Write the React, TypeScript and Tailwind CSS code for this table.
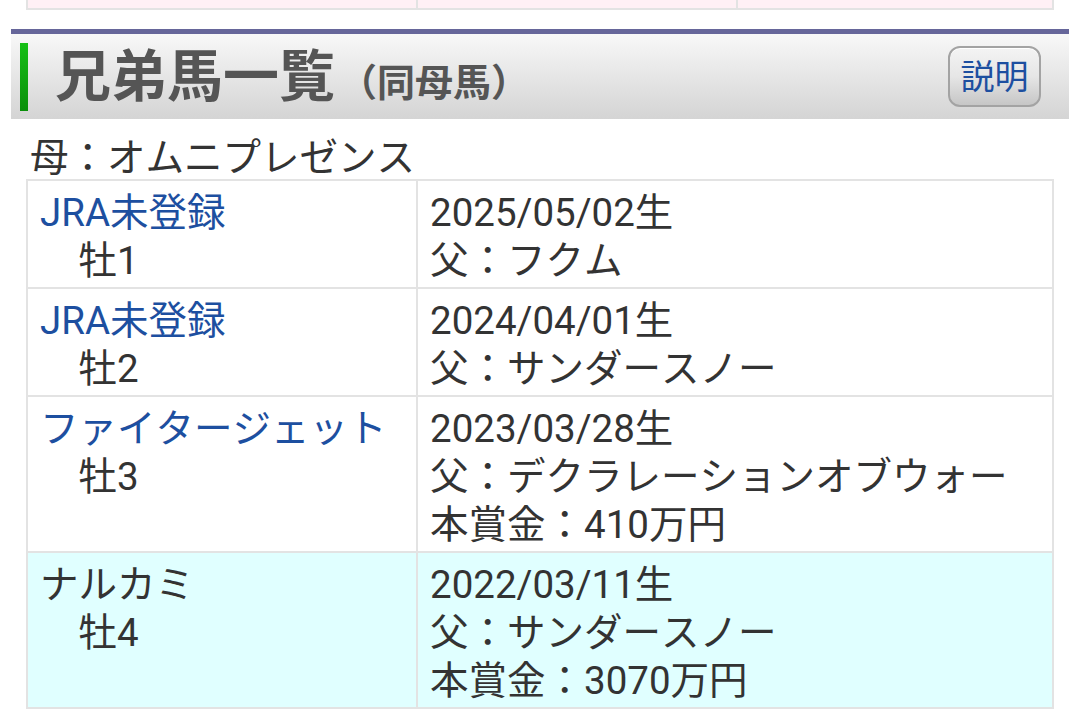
import React from 'react';

interface Sibling {
  name: string;
  link: boolean;
  sex: string;
  birth: string;
  sire: string;
  prize?: string;
  highlight?: boolean;
}

const siblings: Sibling[] = [
  { name: 'JRA未登録', link: true, sex: '牡1', birth: '2025/05/02生', sire: 'フクム' },
  { name: 'JRA未登録', link: true, sex: '牡2', birth: '2024/04/01生', sire: 'サンダースノー' },
  {
    name: 'ファイタージェット',
    link: true,
    sex: '牡3',
    birth: '2023/03/28生',
    sire: 'デクラレーションオブウォー',
    prize: '410万円',
  },
  {
    name: 'ナルカミ',
    link: false,
    sex: '牡4',
    birth: '2022/03/11生',
    sire: 'サンダースノー',
    prize: '3070万円',
    highlight: true,
  },
];

export default function App() {
  return (
    <div
      className="min-h-[712px] bg-white text-[#333] [font-kerning:none]"
      style={{ fontFamily: 'Roboto, "Noto Sans CJK JP", sans-serif' }}
    >
      {/* 前のテーブルの下端 */}
      <div className="mx-[26px] grid h-[10px] grid-cols-[390px_320px_1fr] border-x-2 border-b-2 border-[#e3e3e3] bg-[#fff0f5]">
        <div className="border-r-2 border-[#e3e3e3]" />
        <div className="border-r-2 border-[#e3e3e3]" />
        <div />
      </div>

      {/* 見出し */}
      <div className="mx-[11px] mt-[19px] flex h-[90px] items-center border-t-[5px] border-[#66669a] bg-gradient-to-b from-[#f8f8f8] to-[#d4d4d4] pl-[9px] pr-[28px]">
        <div className="h-[68px] w-2 bg-gradient-to-b from-[#16c016] to-[#0a8f0a]" />
        <h2 className="ml-[27px] text-[56px] font-bold leading-none text-[#555]">
          兄弟馬一覧<span className="ml-1 text-[38px]">（同母馬）</span>
        </h2>
        <button className="ml-auto flex h-[61px] w-[93px] items-center justify-center rounded-[12px] border-2 border-[#a3a3a3] bg-gradient-to-b from-[#f4f4f4] via-[#e6e6e6] to-[#c6c6c6] text-[34px] leading-none text-[#1d4fa0] shadow-[inset_0_1px_0_#fff]">
          説明
        </button>
      </div>

      <div className="mt-[12px] pl-[30px] pt-[6px] text-[38.5px] leading-[42px]">母：オムニプレゼンス</div>

      <div className="mx-[26px]">
        <table className="w-full border-collapse text-[38.5px] leading-[48px]">
          <tbody>
            {siblings.map((s, i) => (
              <tr key={i} className={s.highlight ? 'bg-[#e0ffff]' : ''}>
                <td className="w-[390px] border-2 border-[#e3e3e3] px-3 pb-[2px] pt-[8px] align-top">
                  <div className={s.link ? 'text-[#1d4fa0]' : ''}>{s.name}</div>
                  <div>　{s.sex}</div>
                </td>
                <td className="border-2 border-[#e3e3e3] px-3 pb-[2px] pt-[8px] align-top">
                  <div>{s.birth}</div>
                  <div>父：{s.sire}</div>
                  {s.prize && <div>本賞金：{s.prize}</div>}
                </td>
              </tr>
            ))}
          </tbody>
        </table>
      </div>
    </div>
  );
}
